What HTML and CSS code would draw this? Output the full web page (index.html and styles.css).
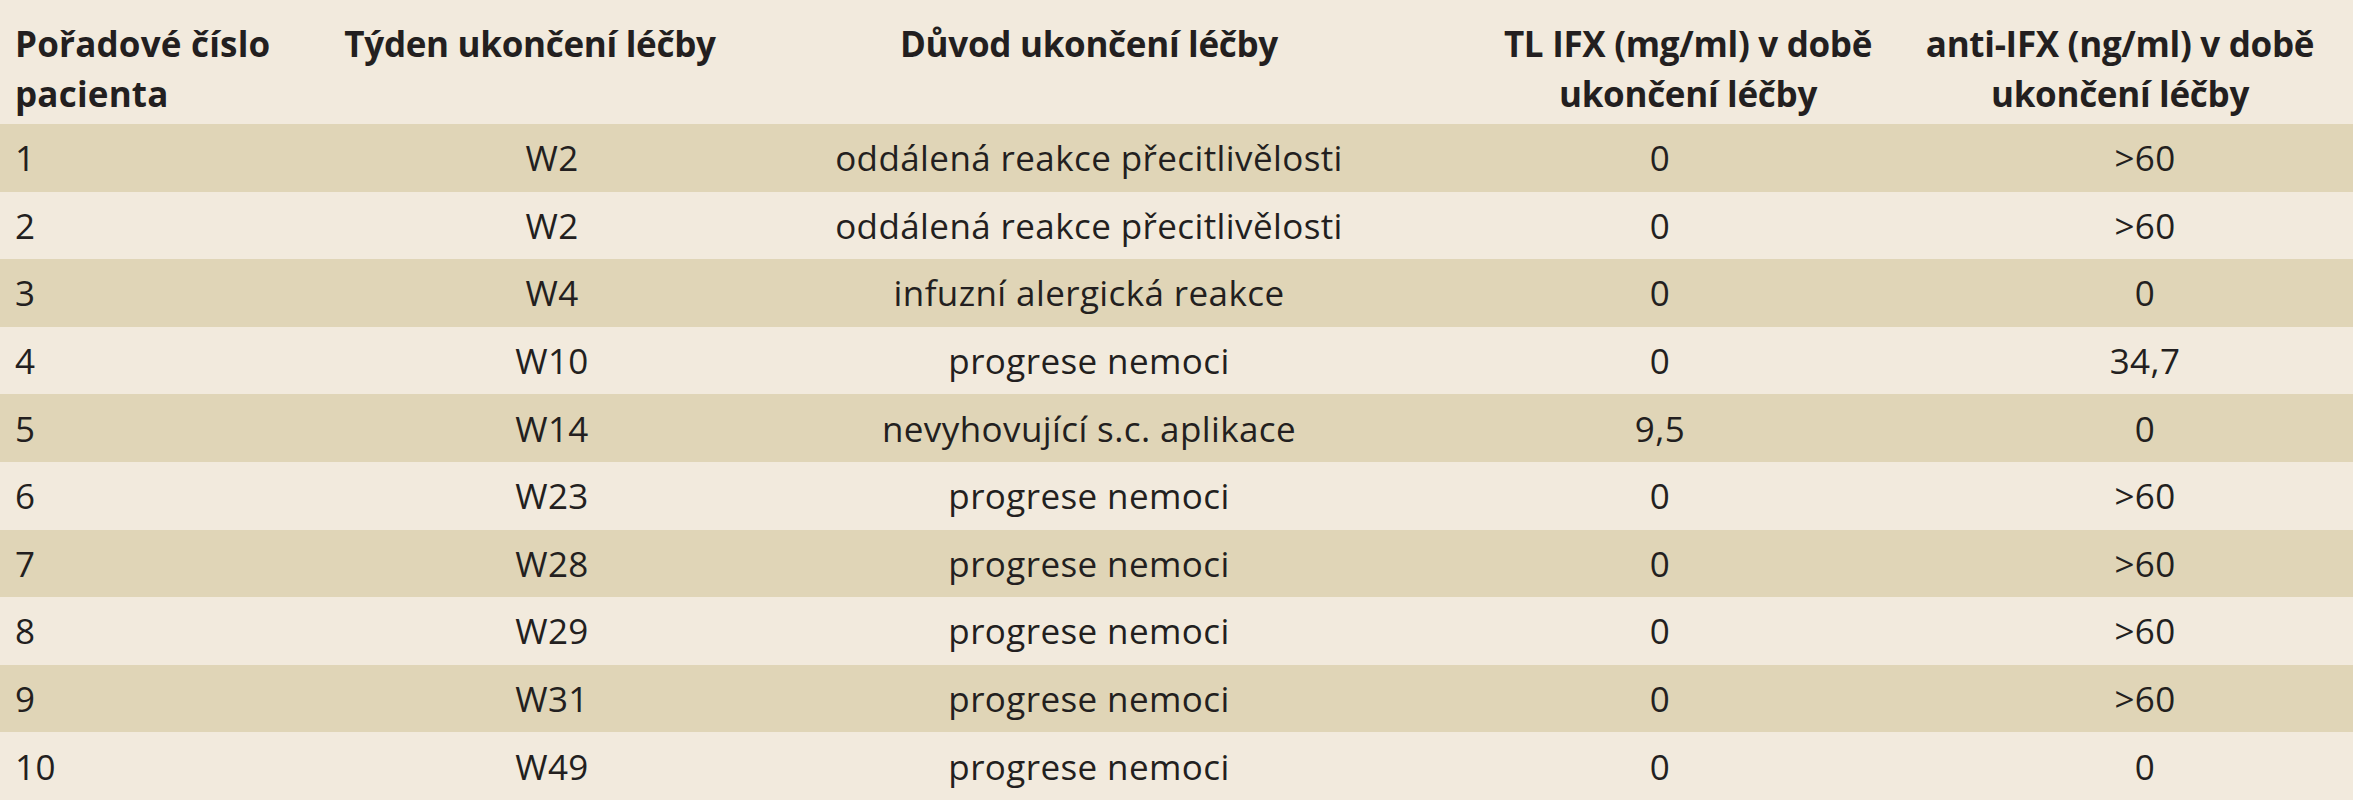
FILE: index.html
```html
<!DOCTYPE html>
<html lang="cs">
<head>
<meta charset="utf-8">
<title>Tabulka</title>
<link rel="stylesheet" href="styles.css">
</head>
<body>
<table class="tbl">
  <colgroup>
    <col class="w1"><col class="w2"><col class="w3"><col class="w4"><col class="w5">
  </colgroup>
  <thead>
    <tr>
      <th class="h1">Pořadové číslo<br>pacienta</th>
      <th class="h2">Týden ukončení léčby</th>
      <th class="h3">Důvod ukončení léčby</th>
      <th class="h4">TL IFX (mg/ml) v době<br>ukončení léčby</th>
      <th class="h5">anti-IFX (ng/ml) v době<br>ukončení léčby</th>
    </tr>
  </thead>
  <tbody>
    <tr><td class="c1">1</td><td class="c2">W2</td><td class="c3">oddálená reakce přecitlivělosti</td><td class="c4">0</td><td class="c5">&gt;60</td></tr>
    <tr><td class="c1">2</td><td class="c2">W2</td><td class="c3">oddálená reakce přecitlivělosti</td><td class="c4">0</td><td class="c5">&gt;60</td></tr>
    <tr><td class="c1">3</td><td class="c2">W4</td><td class="c3">infuzní alergická reakce</td><td class="c4">0</td><td class="c5">0</td></tr>
    <tr><td class="c1">4</td><td class="c2">W10</td><td class="c3">progrese nemoci</td><td class="c4">0</td><td class="c5">34,7</td></tr>
    <tr><td class="c1">5</td><td class="c2">W14</td><td class="c3">nevyhovující s.c. aplikace</td><td class="c4">9,5</td><td class="c5">0</td></tr>
    <tr><td class="c1">6</td><td class="c2">W23</td><td class="c3">progrese nemoci</td><td class="c4">0</td><td class="c5">&gt;60</td></tr>
    <tr><td class="c1">7</td><td class="c2">W28</td><td class="c3">progrese nemoci</td><td class="c4">0</td><td class="c5">&gt;60</td></tr>
    <tr><td class="c1">8</td><td class="c2">W29</td><td class="c3">progrese nemoci</td><td class="c4">0</td><td class="c5">&gt;60</td></tr>
    <tr><td class="c1">9</td><td class="c2">W31</td><td class="c3">progrese nemoci</td><td class="c4">0</td><td class="c5">&gt;60</td></tr>
    <tr><td class="c1">10</td><td class="c2">W49</td><td class="c3">progrese nemoci</td><td class="c4">0</td><td class="c5">0</td></tr>
  </tbody>
</table>
</body>
</html>
```
FILE: styles.css
```css
html, body {
  margin: 0;
  padding: 0;
  background: #f2eadd;
}
.tbl {
  width: 2353px;
  border-collapse: collapse;
  table-layout: fixed;
  font-family: "Open Sans", "Noto Sans", sans-serif;
  color: #231f20;
}
.w1 { width: 330px; }
.w2 { width: 444px; }
.w3 { width: 630px; }
.w4 { width: 512px; }
.w5 { width: 437px; }

.tbl th {
  height: 124px;
  box-sizing: border-box;
  padding: 19px 0 5px;
  font-size: 35px;
  line-height: 50px;
  font-weight: 700;
  letter-spacing: -0.3px;
  vertical-align: top;
  text-align: center;
  white-space: nowrap;
  background: #f2eadd;
}
.tbl th.h1 { text-align: left; padding-left: 15px; letter-spacing: 0.2px; }
.tbl th.h2 { padding-right: 44px; }
.tbl th.h4 { padding-left: 56px; }
.tbl th.h5 { padding-right: 29px; }

.tbl td {
  height: 67.6px;
  box-sizing: border-box;
  padding: 0;
  font-size: 35px;
  font-weight: 400;
  letter-spacing: 0.4px;
  text-align: center;
  vertical-align: middle;
  white-space: nowrap;
}
.tbl td.c1 { text-align: left; padding-left: 15px; }
.tbl td.c5 { padding-left: 21px; }

.tbl tbody tr:nth-child(odd) td { background: #e0d5b7; }
.tbl tbody tr:nth-child(even) td { background: #f2eadd; }
```
